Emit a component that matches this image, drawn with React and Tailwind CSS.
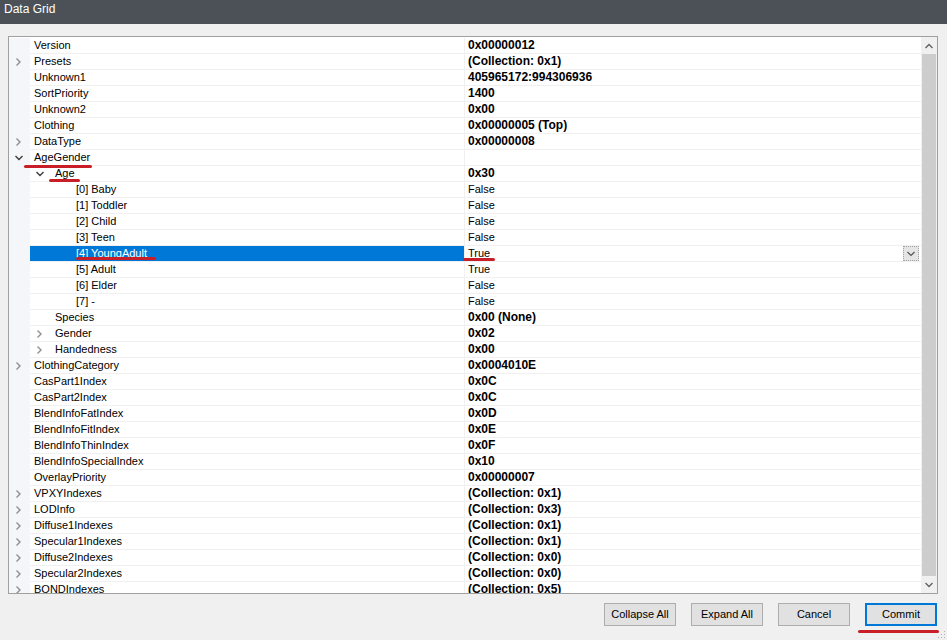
import React from "react";

const rows = [
  { n: "Version", v: "0x00000012" },
  { n: "Presets", v: "(Collection: 0x1)", a: "r" },
  { n: "Unknown1", v: "405965172:994306936" },
  { n: "SortPriority", v: "1400" },
  { n: "Unknown2", v: "0x00" },
  { n: "Clothing", v: "0x00000005 (Top)" },
  { n: "DataType", v: "0x00000008", a: "r" },
  { n: "AgeGender", v: "", a: "d" },
  { n: "Age", v: "0x30", l: 1, a: "d" },
  { n: "[0] Baby", v: "False", l: 2, p: true },
  { n: "[1] Toddler", v: "False", l: 2, p: true },
  { n: "[2] Child", v: "False", l: 2, p: true },
  { n: "[3] Teen", v: "False", l: 2, p: true },
  { n: "[4] YoungAdult", v: "True", l: 2, p: true, sel: true },
  { n: "[5] Adult", v: "True", l: 2, p: true },
  { n: "[6] Elder", v: "False", l: 2, p: true },
  { n: "[7] -", v: "False", l: 2, p: true },
  { n: "Species", v: "0x00 (None)", l: 1 },
  { n: "Gender", v: "0x02", l: 1, a: "r" },
  { n: "Handedness", v: "0x00", l: 1, a: "r" },
  { n: "ClothingCategory", v: "0x0004010E", a: "r" },
  { n: "CasPart1Index", v: "0x0C" },
  { n: "CasPart2Index", v: "0x0C" },
  { n: "BlendInfoFatIndex", v: "0x0D" },
  { n: "BlendInfoFitIndex", v: "0x0E" },
  { n: "BlendInfoThinIndex", v: "0x0F" },
  { n: "BlendInfoSpecialIndex", v: "0x10" },
  { n: "OverlayPriority", v: "0x00000007" },
  { n: "VPXYIndexes", v: "(Collection: 0x1)", a: "r" },
  { n: "LODInfo", v: "(Collection: 0x3)", a: "r" },
  { n: "Diffuse1Indexes", v: "(Collection: 0x1)", a: "r" },
  { n: "Specular1Indexes", v: "(Collection: 0x1)", a: "r" },
  { n: "Diffuse2Indexes", v: "(Collection: 0x0)", a: "r" },
  { n: "Specular2Indexes", v: "(Collection: 0x0)", a: "r" },
  { n: "BONDIndexes", v: "(Collection: 0x5)", a: "r" },
];

function Arrow({ kind }) {
  if (!kind) return <div className="w-[21px] h-[16px] shrink-0" />;
  return (
    <svg width="21" height="16" viewBox="0 0 21 16" className="shrink-0">
      {kind === "r" ? (
        <path d="M7.5 4.5 L11 8 L7.5 11.5" fill="none" stroke="#8f8f8f" strokeWidth="1.4" />
      ) : (
        <path d="M6.5 6 L10 9.5 L13.5 6" fill="none" stroke="#3c3c3c" strokeWidth="1.4" />
      )}
    </svg>
  );
}

function Row({ r }) {
  const l = r.l || 0;
  return (
    <div className="flex h-[16px]">
      <div className="w-[21px] shrink-0 bg-[#f4f6f9]">{l === 0 ? <Arrow kind={r.a} /> : null}</div>
      <div
        className={
          "w-[434px] shrink-0 flex items-center h-[16px] border-b border-[#f0f0f0] " +
          (r.sel ? "bg-[#0078d7] text-white" : "text-black")
        }
      >
        {l === 2 ? <div className="w-[21px] shrink-0" /> : null}
        {l >= 1 ? <Arrow kind={r.a} /> : null}
        <span className="pl-[4px] text-[11px] leading-[15px] whitespace-nowrap">{r.n}</span>
      </div>
      <div className="w-[1px] shrink-0 bg-[#f0f0f0]" />
      <div className="flex-1 flex items-center h-[16px] border-b border-[#f0f0f0] pl-[3px]">
        <span
          className={
            "whitespace-nowrap leading-[15px] text-black " +
            (r.p ? "text-[11px]" : "text-[12px] font-bold")
          }
        >
          {r.v}
        </span>
        {r.sel ? (
          <div className="ml-auto mr-[2px] w-[16px] h-[15px] border border-dotted border-[#a0a0a0] bg-[#e5e5e5] flex items-center justify-center">
            <svg width="10" height="6" viewBox="0 0 10 6">
              <path d="M1.5 1 L5 4.5 L8.5 1" fill="none" stroke="#555" strokeWidth="1.2" />
            </svg>
          </div>
        ) : null}
      </div>
    </div>
  );
}

function Btn({ children, primary }) {
  return (
    <div
      className={
        "w-[72px] h-[23px] flex items-center justify-center text-[11px] text-black bg-[#e1e1e1] " +
        (primary ? "border-2 border-[#0078d7]" : "border border-[#adadad]")
      }
    >
      {children}
    </div>
  );
}

function Mark({ cls }) {
  return <div className={"absolute h-[3px] rounded-full bg-[#c81e28] " + cls} />;
}

export default function App() {
  return (
    <div
      className="relative w-[947px] h-[640px] bg-[#f0f0f0] flex flex-col overflow-hidden"
      style={{ fontFamily: '"Liberation Sans", Arial, sans-serif' }}
    >
      <div className="h-[24px] bg-[#4b5156] text-white text-[12px] pl-[4px] pt-[1px] leading-[16px] shrink-0">
        Data Grid
      </div>
      <div className="flex flex-col pt-[12px] pl-[8px] pr-[9px]">
        <div className="h-[558px] border border-[#a0a0a0] bg-white flex overflow-hidden">
          <div className="flex-1 overflow-hidden pt-[1px]">
            {rows.map((r, i) => (
              <Row key={i} r={r} />
            ))}
          </div>
          <div className="w-[16px] shrink-0 flex flex-col bg-[#f0f0f0]">
            <div className="h-[17px] flex items-center justify-center">
              <svg width="10" height="6" viewBox="0 0 10 6">
                <path d="M1.5 5 L5 1.5 L8.5 5" fill="none" stroke="#606060" strokeWidth="1.3" />
              </svg>
            </div>
            <div className="flex-1 bg-[#cdcdcd] mx-[1px]" />
            <div className="h-[17px] flex items-center justify-center">
              <svg width="10" height="6" viewBox="0 0 10 6">
                <path d="M1.5 1 L5 4.5 L8.5 1" fill="none" stroke="#606060" strokeWidth="1.3" />
              </svg>
            </div>
          </div>
        </div>
        <div className="flex justify-end gap-[15px] mt-[9px] mr-[1px]">
          <Btn>Collapse All</Btn>
          <Btn>Expand All</Btn>
          <Btn>Cancel</Btn>
          <Btn primary>Commit</Btn>
        </div>
      </div>

      <svg className="absolute right-[1px] bottom-[1px]" width="8" height="8" viewBox="0 0 8 8">
        <rect x="6" y="0" width="1" height="1" fill="#b0b0b0" />
        <rect x="3" y="3" width="1" height="1" fill="#b0b0b0" />
        <rect x="6" y="3" width="1" height="1" fill="#b0b0b0" />
        <rect x="0" y="6" width="1" height="1" fill="#b0b0b0" />
        <rect x="3" y="6" width="1" height="1" fill="#b0b0b0" />
        <rect x="6" y="6" width="1" height="1" fill="#b0b0b0" />
      </svg>

      <Mark cls="left-[24px] top-[165px] w-[68px]" />
      <Mark cls="left-[49px] top-[179px] w-[31px]" />
      <Mark cls="left-[76px] top-[257px] w-[80px]" />
      <Mark cls="left-[463px] top-[258px] w-[32px]" />
      <Mark cls="left-[858px] top-[630px] w-[81px]" />
    </div>
  );
}
